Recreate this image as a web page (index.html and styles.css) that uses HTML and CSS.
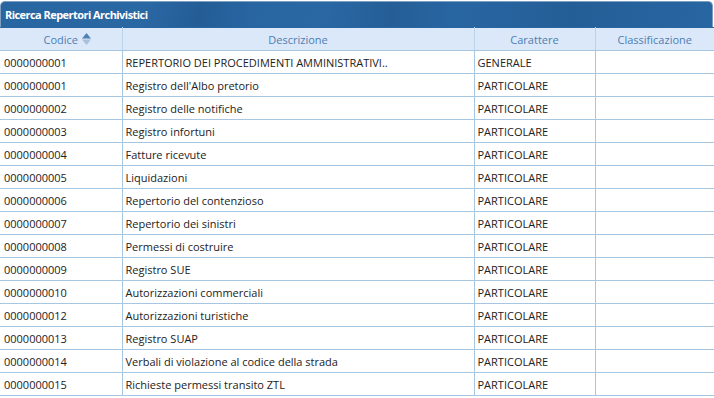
FILE: index.html
```html
<!DOCTYPE html>
<html lang="it">
<head>
<meta charset="utf-8">
<title>Ricerca Repertori Archivistici</title>
<link rel="stylesheet" href="styles.css">
</head>
<body>
<div class="panel">
  <div class="title">Ricerca Repertori Archivistici</div>
  <table class="grid">
    <colgroup>
      <col class="c1"><col class="c2"><col class="c3"><col class="c4">
    </colgroup>
    <thead>
      <tr>
        <th><span class="hd">Codice<svg class="sort" width="9" height="12" viewBox="0 0 9 12"><path d="M4.5 0 L9 5.5 H0 Z" fill="#4f80b6"/><path d="M0 6.5 H9 L4.5 12 Z" fill="#a9c0da"/></svg></span></th>
        <th>Descrizione</th>
        <th>Carattere</th>
        <th>Classificazione</th>
      </tr>
    </thead>
    <tbody>
      <tr><td>0000000001</td><td>REPERTORIO DEI PROCEDIMENTI AMMINISTRATIVI..</td><td>GENERALE</td><td></td></tr>
      <tr><td>0000000001</td><td>Registro dell'Albo pretorio</td><td>PARTICOLARE</td><td></td></tr>
      <tr><td>0000000002</td><td>Registro delle notifiche</td><td>PARTICOLARE</td><td></td></tr>
      <tr><td>0000000003</td><td>Registro infortuni</td><td>PARTICOLARE</td><td></td></tr>
      <tr><td>0000000004</td><td>Fatture ricevute</td><td>PARTICOLARE</td><td></td></tr>
      <tr><td>0000000005</td><td>Liquidazioni</td><td>PARTICOLARE</td><td></td></tr>
      <tr><td>0000000006</td><td>Repertorio del contenzioso</td><td>PARTICOLARE</td><td></td></tr>
      <tr><td>0000000007</td><td>Repertorio dei sinistri</td><td>PARTICOLARE</td><td></td></tr>
      <tr><td>0000000008</td><td>Permessi di costruire</td><td>PARTICOLARE</td><td></td></tr>
      <tr><td>0000000009</td><td>Registro SUE</td><td>PARTICOLARE</td><td></td></tr>
      <tr><td>0000000010</td><td>Autorizzazioni commerciali</td><td>PARTICOLARE</td><td></td></tr>
      <tr><td>0000000012</td><td>Autorizzazioni turistiche</td><td>PARTICOLARE</td><td></td></tr>
      <tr><td>0000000013</td><td>Registro SUAP</td><td>PARTICOLARE</td><td></td></tr>
      <tr><td>0000000014</td><td>Verbali di violazione al codice della strada</td><td>PARTICOLARE</td><td></td></tr>
      <tr><td>0000000015</td><td>Richieste permessi transito ZTL</td><td>PARTICOLARE</td><td></td></tr>
    </tbody>
  </table>
</div>
</body>
</html>
```
FILE: styles.css
```css
html, body {
  margin: 0;
  padding: 0;
  background: #ffffff;
}
body {
  font-family: "Open Sans", "DejaVu Sans", sans-serif;
  font-size: 11px;
  color: #222222;
  overflow: hidden;
}
.panel {
  width: 714px;
  padding-top: 1px;
}
.title {
  width: 713px;
  height: 26px;
  box-sizing: border-box;
  border: 1px solid #7e9fc0;
  border-bottom: none;
  border-radius: 5px 5px 0 0;
  background: linear-gradient(100deg, #2866a2 0%, #2a68a4 20%, #245d96 28%, #2866a2 36%, #2a68a4 45%, #255e97 55%, #2866a2 64%, #245e97 80%, #2866a2 100%);
  color: #ffffff;
  font-weight: 700;
  font-size: 11px;
  letter-spacing: -0.55px;
  line-height: 25px;
  padding-left: 4px;
}
.grid {
  border-collapse: collapse;
  table-layout: fixed;
  width: 714px;
}
.c1 { width: 122px; }
.c2 { width: 352px; }
.c3 { width: 121px; }
.c4 { width: 119px; }
.grid th {
  height: 23px;
  padding: 0;
  background: #dbe8f9;
  color: #4d7db1;
  font-weight: 400;
  font-size: 11px;
  text-align: center;
  border-top: 1px solid #2866a2;
  border-bottom: 1px solid #a7c6e2;
  border-right: 1px solid #bcd3ea;
  box-sizing: border-box;
}
.grid th:last-child { border-right: none; }
.hd {
  position: relative;
  display: inline-block;
}
.sort {
  position: absolute;
  left: 100%;
  top: 1px;
  margin-left: 4px;
}
.grid td {
  height: 22px;
  padding: 0 2px 0 3px;
  white-space: nowrap;
  overflow: hidden;
  border-bottom: 1px solid #a7c6e2;
  border-right: 1px solid #a7c6e2;
  vertical-align: middle;
}
.grid td:first-child { padding-left: 4px; }
.grid td:last-child { border-right: none; }
```
